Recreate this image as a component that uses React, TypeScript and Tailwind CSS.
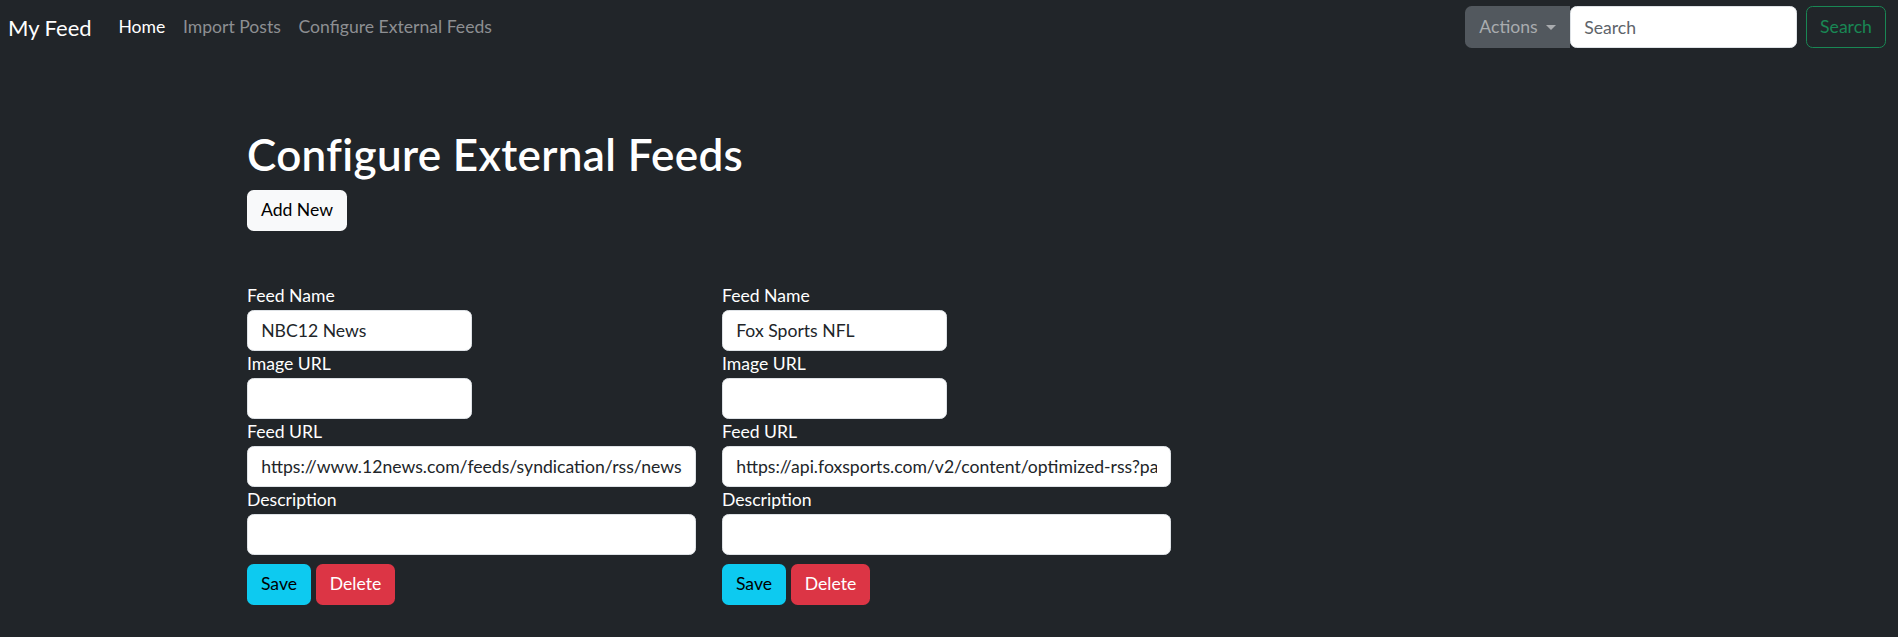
import React from "react";

type Feed = { name: string; image: string; url: string; description: string };

const feeds: Feed[] = [
  { name: "NBC12 News", image: "", url: "https://www.12news.com/feeds/syndication/rss/news/", description: "" },
  { name: "Fox Sports NFL", image: "", url: "https://api.foxsports.com/v2/content/optimized-rss?partnerKey=MB0Wehpmuj2lUhuRhQaafhBjAJqaPU244mlTDK1i&size=30&tags=fs/nfl", description: "" },
];

function Field({ label, value, wide }: { label: string; value: string; wide?: boolean }) {
  return (
    <div className="flex flex-col">
      <label className="block text-[17.6px] leading-[26.4px] text-white">{label}</label>
      <input
        readOnly
        value={value}
        className={`${wide ? "w-full" : "w-1/2"} h-[41.6px] rounded-[6.6px] border border-[#dee2e6] bg-white px-[13.2px] text-[17.6px] leading-[26.4px] text-[#212529] outline-none`}
      />
    </div>
  );
}

function FeedCard({ feed }: { feed: Feed }) {
  return (
    <div className="flex w-[449px] flex-col">
      <Field label="Feed Name" value={feed.name} />
      <Field label="Image URL" value={feed.image} />
      <Field label="Feed URL" value={feed.url} wide />
      <Field label="Description" value={feed.description} wide />
      <div className="mt-[8.8px] flex gap-[5px]">
        <button className="h-[41px] w-[64px] rounded-[6.6px] bg-[#0dcaf0] text-[17.6px] leading-[26.4px] text-black">Save</button>
        <button className="h-[41px] w-[79px] rounded-[6.6px] bg-[#dc3545] text-[17.6px] leading-[26.4px] text-white">Delete</button>
      </div>
    </div>
  );
}

export default function App() {
  return (
    <div className="min-h-[637px] w-full bg-[#212529] font-['Lato','Noto_Sans',sans-serif] text-[#dee2e6]">
      <nav className="flex h-[54px] items-center pl-[8px] pr-[12px]">
        <a className="mr-[18px] text-[22px] leading-[33px] text-white">My Feed</a>
        <div className="flex items-center">
          <a className="px-[8.8px] text-[17.6px] leading-[26.4px] text-white">Home</a>
          <a className="px-[8.8px] text-[17.6px] leading-[26.4px] text-[#8d8f92]">Import Posts</a>
          <a className="px-[8.8px] text-[17.6px] leading-[26.4px] text-[#8d8f92]">Configure External Feeds</a>
        </div>
        <div className="ml-auto flex items-center">
          <div className="flex items-center">
            <button className="flex h-[42px] w-[105px] items-center justify-center rounded-l-[6.6px] bg-[#52585e] text-[17.6px] leading-[26.4px] text-[#a9acaf]">
              Actions
              <span className="ml-[8px] inline-block h-0 w-0 border-x-[5px] border-t-[5px] border-x-transparent border-t-[#a9acaf]" />
            </button>
            <input
              readOnly
              placeholder="Search"
              className="h-[42px] w-[227px] rounded-[6.6px] border border-[#dee2e6] bg-white px-[13.2px] text-[17.6px] leading-[26.4px] text-[#212529] outline-none placeholder:text-[#5e646a]"
            />
          </div>
          <button className="ml-[9px] h-[42px] w-[80px] rounded-[6.6px] border border-[#198754] text-[17.6px] leading-[26.4px] text-[#198754]">
            Search
          </button>
        </div>
      </nav>
      <main className="mx-auto w-[1404px] pt-[74px] pb-[30px]">
        <h1 className="mb-[8.8px] text-[44px] font-semibold leading-[52.8px] tracking-[0.35px] text-white">Configure External Feeds</h1>
        <button className="h-[41px] w-[100px] rounded-[6.6px] bg-[#f8f9fa] text-[17.6px] leading-[26.4px] text-black">Add New</button>
        <div className="mt-[52.6px] flex gap-[26px]">
          {feeds.map((f) => (
            <FeedCard key={f.name} feed={f} />
          ))}
        </div>
      </main>
    </div>
  );
}
